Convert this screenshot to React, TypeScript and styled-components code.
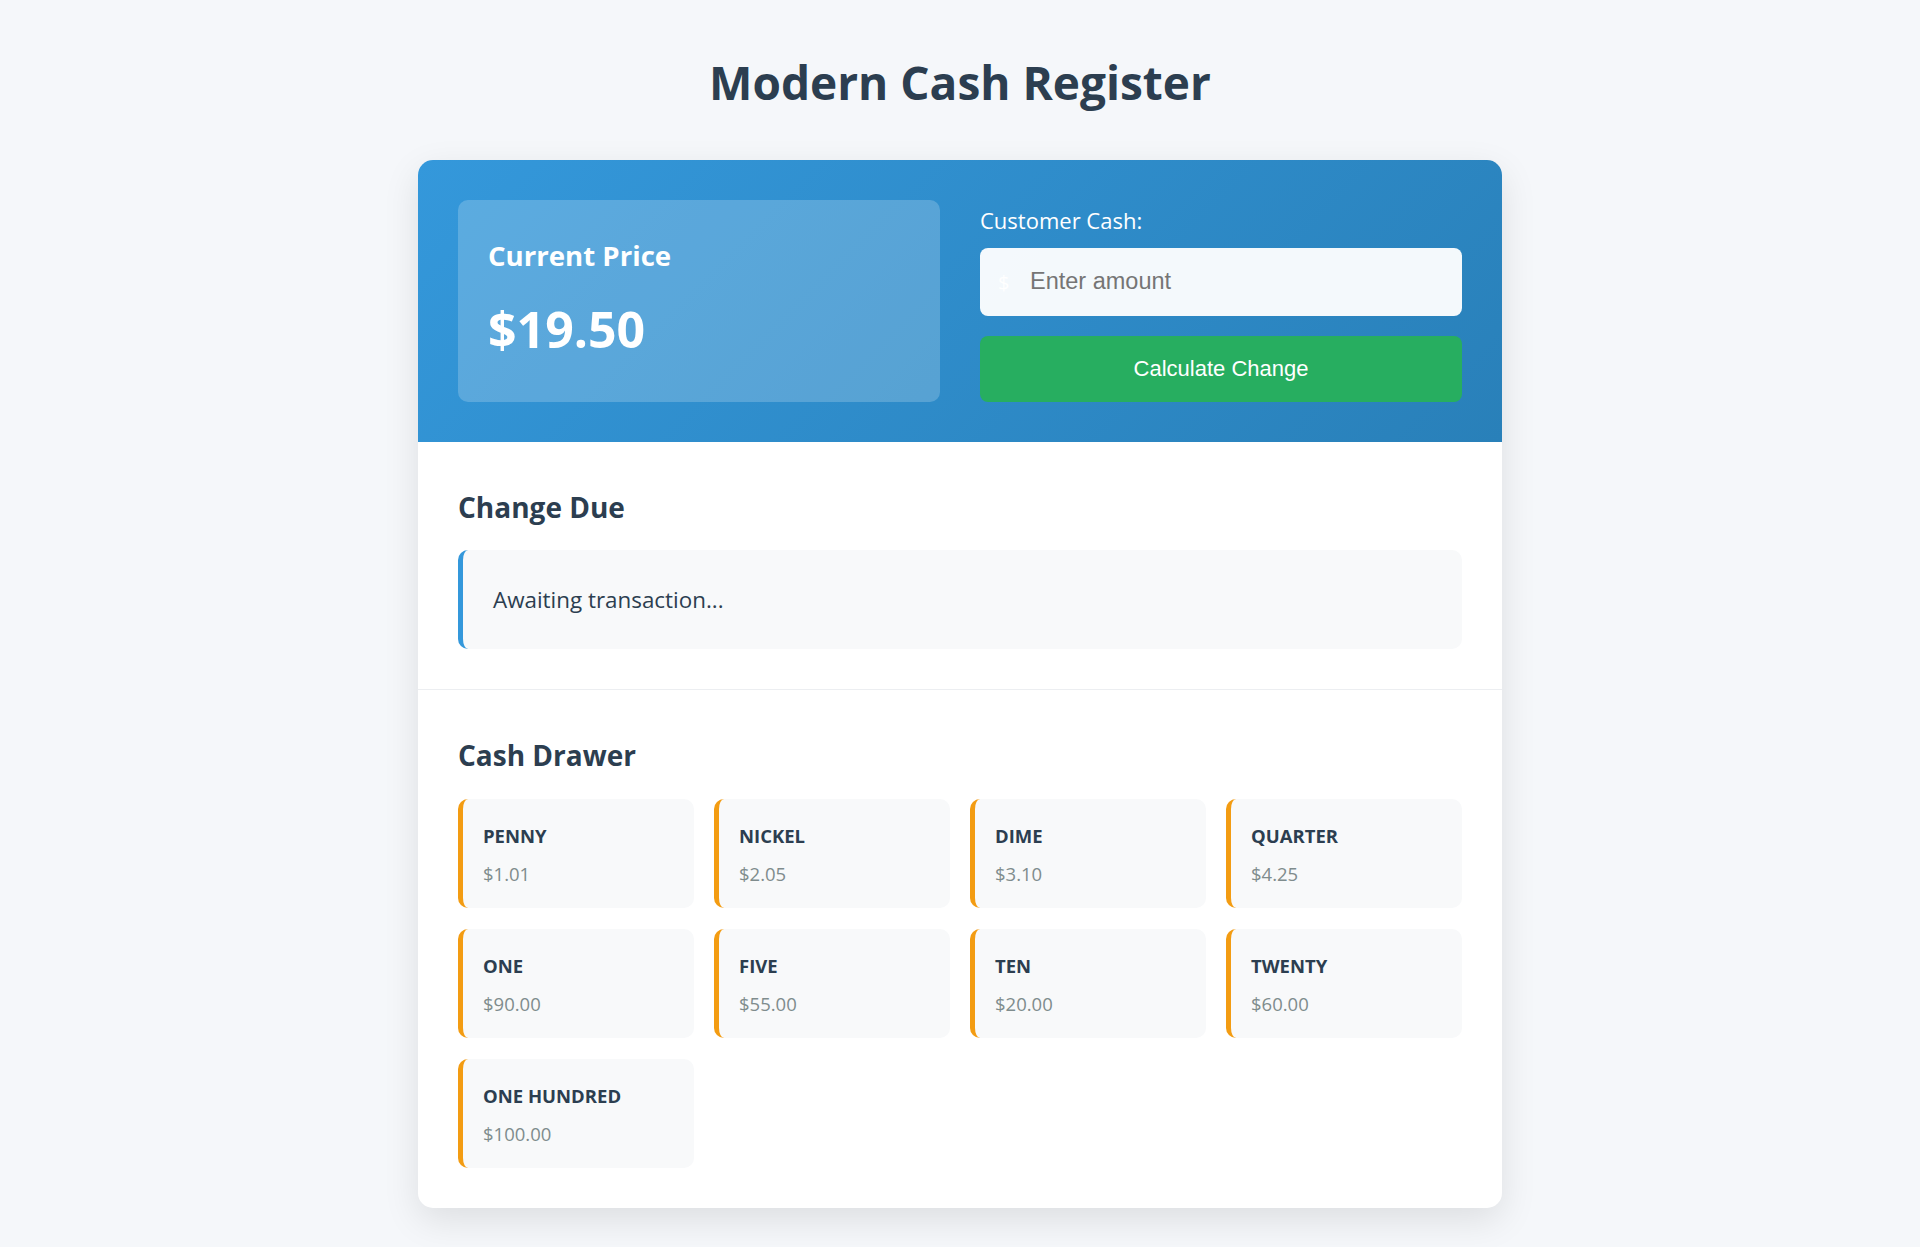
import React from "react";
import styled, { createGlobalStyle } from "styled-components";

const GlobalStyle = createGlobalStyle`
  * { box-sizing: border-box; }
  html, body { margin: 0; padding: 0; }
  body {
    background: #f5f7fa;
    font-family: "Open Sans", "Noto Sans", sans-serif;
    color: #2c3e50;
  }
`;

const Page = styled.div`
  padding: 54.5px 0 40px;
`;

const Title = styled.h1`
  margin: 0 0 50px;
  text-align: center;
  font-size: 46px;
  line-height: 1.2;
  font-weight: 700;
  color: #2c3e50;
`;

const Register = styled.div`
  width: 1084px;
  margin: 0 auto;
  background: #ffffff;
  border-radius: 15px;
  overflow: hidden;
  box-shadow: 0 12px 36px rgba(0, 0, 0, 0.1);
`;

const Header = styled.div`
  display: grid;
  grid-template-columns: 1fr 1fr;
  gap: 40px;
  padding: 40px;
  background: linear-gradient(135deg, #3498db 0%, #2980b9 100%);
`;

const PriceBox = styled.div`
  background: rgba(255, 255, 255, 0.2);
  border-radius: 10px;
  padding: 39.5px 30px 0;
  color: #ffffff;
`;

const PriceLabel = styled.h2`
  margin: 0 0 27px;
  font-size: 27.6px;
  line-height: 1.2;
  font-weight: 700;
`;

const PriceValue = styled.div`
  font-size: 50px;
  line-height: 1.2;
  font-weight: 700;
`;

const InputColumn = styled.div`
  display: flex;
  flex-direction: column;
`;

const FieldLabel = styled.label`
  display: block;
  height: 40px;
  margin-bottom: 8px;
  font-size: 22px;
  line-height: 40px;
  color: #ffffff;
`;

const InputWrap = styled.div`
  position: relative;
  margin-bottom: 20px;
`;

const Dollar = styled.span`
  position: absolute;
  left: 18px;
  top: 50%;
  transform: translateY(-50%);
  font-family: "Open Sans", sans-serif;
  font-size: 20px;
  color: #ffffff;
  pointer-events: none;
`;

const CashInput = styled.input`
  display: block;
  width: 100%;
  height: 68px;
  padding: 0 20px 0 50px;
  border: none;
  border-radius: 8px;
  background: rgba(255, 255, 255, 0.95);
  font-family: "Liberation Sans", Arial, sans-serif;
  font-size: 23.5px;
  color: #2c3e50;
  outline: none;
  &::placeholder { color: #757575; }
`;

const CalcButton = styled.button`
  display: block;
  width: 100%;
  height: 66px;
  border: none;
  border-radius: 8px;
  background: #27ae60;
  color: #ffffff;
  font-family: "Liberation Sans", Arial, sans-serif;
  font-size: 22px;
  cursor: pointer;
`;

const Section = styled.section<{ $divider?: boolean }>`
  padding: 49px 40px 40px;
  border-top: ${(p) => (p.$divider ? "1px solid #eceef1" : "none")};
`;

const SectionTitle = styled.h2`
  margin: 0 0 26px;
  font-size: 28px;
  line-height: 1.2;
  font-weight: 700;
  color: #2c3e50;
`;

const ChangeBox = styled.div`
  background: #f8f9fa;
  border-left: 5px solid #3498db;
  border-radius: 10px;
  padding: 32.5px 30px 33px;
  font-size: 22.4px;
  line-height: 1.5;
  color: #2c3e50;
`;

const DrawerGrid = styled.div`
  display: grid;
  grid-template-columns: repeat(4, 1fr);
  gap: 21px 20px;
`;

const DrawerCard = styled.div`
  background: #f8f9fa;
  border-left: 5px solid #f39c12;
  border-radius: 10px;
  padding: 23.5px 20px 20px;
`;

const Denomination = styled.div`
  font-size: 18.5px;
  line-height: 1.5;
  font-weight: 700;
  color: #2c3e50;
  text-transform: uppercase;
`;

const Amount = styled.div`
  margin-top: 10px;
  font-size: 18.5px;
  line-height: 1.5;
  color: #7f8c8d;
`;

const drawer: [string, number][] = [
  ["PENNY", 1.01],
  ["NICKEL", 2.05],
  ["DIME", 3.1],
  ["QUARTER", 4.25],
  ["ONE", 90],
  ["FIVE", 55],
  ["TEN", 20],
  ["TWENTY", 60],
  ["ONE HUNDRED", 100],
];

export default function App() {
  return (
    <>
      <GlobalStyle />
      <Page>
        <Title>Modern Cash Register</Title>
        <Register>
          <Header>
            <PriceBox>
              <PriceLabel>Current Price</PriceLabel>
              <PriceValue>$19.50</PriceValue>
            </PriceBox>
            <InputColumn>
              <FieldLabel htmlFor="cash">Customer Cash:</FieldLabel>
              <InputWrap>
                <Dollar>$</Dollar>
                <CashInput id="cash" type="number" placeholder="Enter amount" />
              </InputWrap>
              <CalcButton type="button">Calculate Change</CalcButton>
            </InputColumn>
          </Header>
          <Section>
            <SectionTitle>Change Due</SectionTitle>
            <ChangeBox>Awaiting transaction...</ChangeBox>
          </Section>
          <Section $divider>
            <SectionTitle>Cash Drawer</SectionTitle>
            <DrawerGrid>
              {drawer.map(([name, amt]) => (
                <DrawerCard key={name}>
                  <Denomination>{name}</Denomination>
                  <Amount>${amt.toFixed(2)}</Amount>
                </DrawerCard>
              ))}
            </DrawerGrid>
          </Section>
        </Register>
      </Page>
    </>
  );
}
